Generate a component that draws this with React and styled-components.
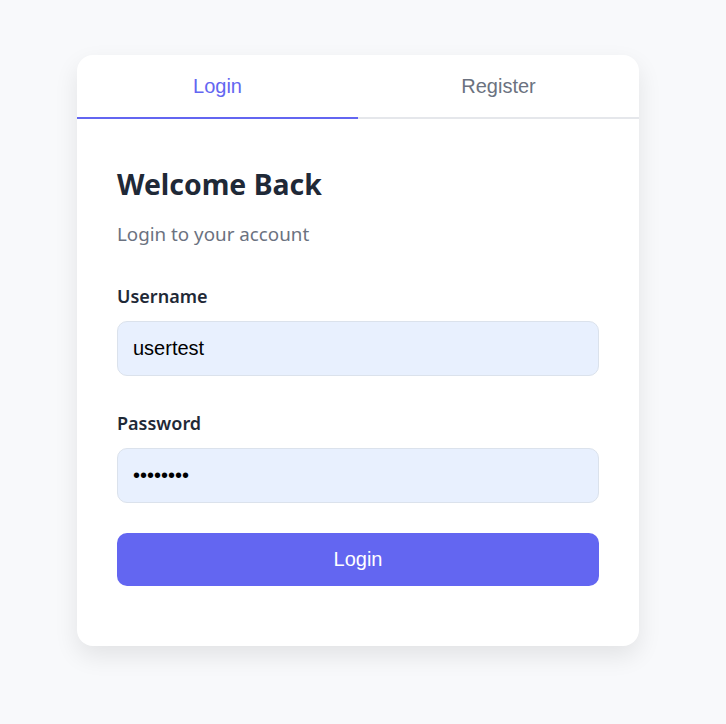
import React, { useState } from 'react'
import styled, { createGlobalStyle } from 'styled-components'

const GlobalStyle = createGlobalStyle`
  html, body {
    margin: 0;
    padding: 0;
    background: #f8f9fb;
  }
  * {
    box-sizing: border-box;
  }
`

const Page = styled.div`
  min-height: 724px;
  display: flex;
  justify-content: center;
  padding: 55px 10px 0 0;
  font-family: 'Noto Sans', 'Open Sans', sans-serif;
`

const Card = styled.div`
  width: 562px;
  height: 591px;
  background: #ffffff;
  border-radius: 16px;
  box-shadow: 0 10px 25px rgba(0, 0, 0, 0.09);
  overflow: hidden;
`

const Tabs = styled.div`
  display: flex;
  border-bottom: 2px solid #e5e7eb;
`

const Tab = styled.button`
  flex: 1;
  height: 64px;
  margin-bottom: -2px;
  border: none;
  border-bottom: 2px solid ${p => (p.$active ? '#6366f1' : 'transparent')};
  background: transparent;
  font-family: 'Liberation Sans', Arial, sans-serif;
  font-size: 20px;
  color: ${p => (p.$active ? '#6366f1' : '#6b7280')};
  cursor: pointer;
  padding: 0;
`

const Body = styled.form`
  padding: 48px 40px 0;
  display: flex;
  flex-direction: column;
`

const Title = styled.h1`
  margin: 0;
  font-size: 28.4px;
  line-height: 34px;
  font-weight: 700;
  color: #1f2937;
`

const Subtitle = styled.p`
  margin: 20px 0 0;
  font-size: 18.8px;
  line-height: 27px;
  color: #6b7280;
`

const Field = styled.div`
  display: flex;
  flex-direction: column;
  margin-top: ${p => p.$top}px;
`

const Label = styled.label`
  font-size: 18px;
  line-height: 24px;
  font-weight: 600;
  color: #1f2937;
  margin-bottom: 13px;
`

const Input = styled.input`
  height: 55px;
  padding: 0 15px;
  border: 1px solid #dbe2ec;
  border-radius: 10px;
  background: #e8f0fe;
  font-family: 'Liberation Sans', Arial, sans-serif;
  font-size: 20px;
  color: #000000;
  outline: none;
`

const Submit = styled.button`
  margin-top: 30px;
  height: 53px;
  border: none;
  border-radius: 10px;
  background: #6366f1;
  color: #ffffff;
  font-family: 'Liberation Sans', Arial, sans-serif;
  font-size: 20px;
  cursor: pointer;
`

export default function App() {
  const [tab, setTab] = useState('login')
  return (
    <>
      <GlobalStyle />
      <Page>
        <Card>
          <Tabs>
            <Tab $active={tab === 'login'} onClick={() => setTab('login')}>Login</Tab>
            <Tab $active={tab === 'register'} onClick={() => setTab('register')}>Register</Tab>
          </Tabs>
          <Body onSubmit={e => e.preventDefault()}>
            <Title>Welcome Back</Title>
            <Subtitle>Login to your account</Subtitle>
            <Field $top={36}>
              <Label htmlFor="username">Username</Label>
              <Input id="username" type="text" defaultValue="usertest" />
            </Field>
            <Field $top={35}>
              <Label htmlFor="password">Password</Label>
              <Input id="password" type="password" defaultValue="password" />
            </Field>
            <Submit type="submit">Login</Submit>
          </Body>
        </Card>
      </Page>
    </>
  )
}
